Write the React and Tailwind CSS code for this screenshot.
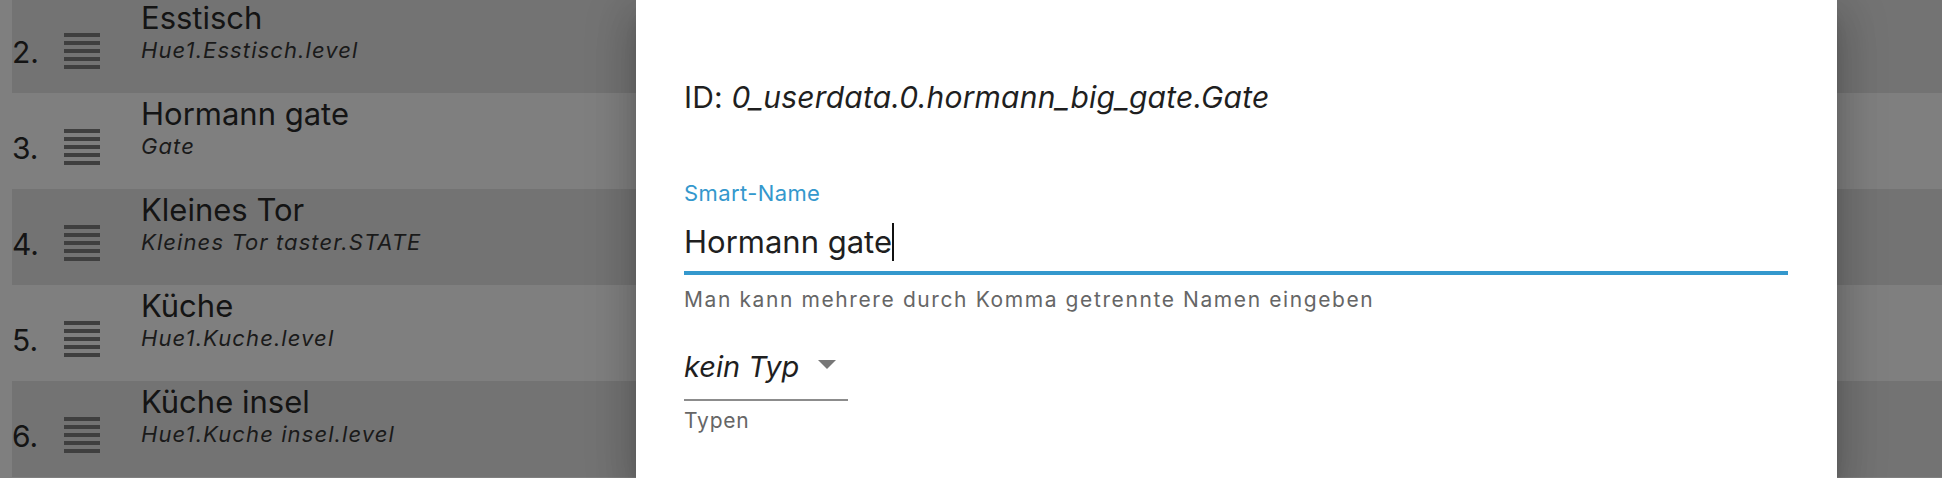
import React from "react";

const rows = [
  { n: "2.", name: "Esstisch", sub: "Hue1.Esstisch.level", dark: true },
  { n: "3.", name: "Hormann gate", sub: "Gate", dark: false },
  { n: "4.", name: "Kleines Tor", sub: "Kleines Tor taster.STATE", dark: true },
  { n: "5.", name: "Küche", sub: "Hue1.Kuche.level", dark: false },
  { n: "6.", name: "Küche insel", sub: "Hue1.Kuche insel.level", dark: true },
];

function DragIcon() {
  return (
    <svg width="36" height="36" viewBox="0 0 36 36" className="block" shapeRendering="crispEdges">
      <rect x="0" y="0" width="36" height="4" fill="#3f3f3f" />
      <rect x="0" y="8" width="36" height="4" fill="#3f3f3f" />
      <rect x="0" y="16" width="36" height="4" fill="#3f3f3f" />
      <rect x="0" y="24" width="36" height="4" fill="#3f3f3f" />
      <rect x="0" y="32" width="36" height="4" fill="#3f3f3f" />
    </svg>
  );
}

export default function App() {
  return (
    <div
      className="relative h-[478px] w-[1942px] overflow-hidden bg-[#7f7f7f]"
      style={{ fontFamily: "Inter, Roboto, 'Noto Sans', sans-serif" }}
    >
      <div className="flex flex-col pl-[12px] -mt-[3px]">
        {rows.map((r) => (
          <div
            key={r.n}
            className={`flex h-[96px] items-start ${r.dark ? "bg-[#737373]" : "bg-[#7f7f7f]"}`}
          >
            <div className="w-[52px] mt-[37px] text-[30px] leading-[36px] text-[#141414]">{r.n}</div>
            <div className="mt-[36px]">
              <DragIcon />
            </div>
            <div className="ml-[41px] mt-[3px] flex flex-col">
              <div className="text-[31px] leading-[36px] text-[#141414]">{r.name}</div>
              <div className="text-[22px] leading-[28px] tracking-[1.1px] italic text-[#1a1a1a]">{r.sub}</div>
            </div>
          </div>
        ))}
      </div>

      <div className="absolute left-[636px] top-0 h-[478px] w-[1201px] bg-white pl-[48px] pr-[49px] shadow-[0_11px_15px_-7px_rgba(0,0,0,0.2),0_24px_38px_3px_rgba(0,0,0,0.14),0_9px_46px_8px_rgba(0,0,0,0.12)]">
        <div className="pt-[79px] text-[30px] leading-[36px] tracking-[0.2px] text-[#1f1f1f]">
          ID: <span className="italic">0_userdata.0.hormann_big_gate.Gate</span>
        </div>

        <div className="mt-[65px] text-[22px] leading-[26px] tracking-[0.4px] text-[#3498cd]">Smart-Name</div>
        <div className="mt-[17px] flex items-center text-[31px] leading-[36px] text-[#1f1f1f]">
          <span>Hormann gate</span>
          <span className="inline-block h-[38px] w-[2px] bg-[#111]" />
        </div>
        <div className="mt-[10px] h-[4px] bg-[#3498cd]" />
        <div className="mt-[13px] text-[21px] leading-[24px] tracking-[1.6px] text-[#666666]">
          Man kann mehrere durch Komma getrennte Namen eingeben
        </div>

        <div className="mt-[37px] flex w-[164px] items-center">
          <span className="text-[29px] leading-[36px] italic text-[#1f1f1f]">kein Typ</span>
          <svg width="18" height="9" viewBox="0 0 18 9" className="ml-[19px] mt-[-6px]">
            <path d="M0 0 L18 0 L9 9 Z" fill="#777777" />
          </svg>
        </div>
        <div className="mt-[14px] h-[2px] w-[164px] bg-[#8c8c8c]" />
        <div className="mt-[7px] text-[21px] leading-[26px] tracking-[0.8px] text-[#666666]">Typen</div>
      </div>
    </div>
  );
}
